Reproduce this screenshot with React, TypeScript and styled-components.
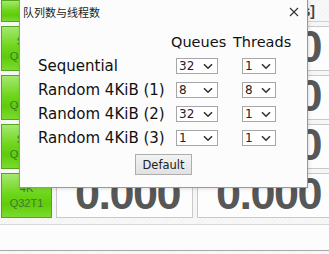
import { Fragment } from 'react';
import styled, { createGlobalStyle } from 'styled-components';

const GlobalStyle = createGlobalStyle`
  html, body {
    margin: 0;
    padding: 0;
    background: #f7f7f7;
    overflow: hidden;
  }
  body {
    font-family: "DejaVu Sans", Verdana, sans-serif;
  }
`;

const Page = styled.div`
  position: relative;
  width: 329px;
  height: 254px;
  overflow: hidden;
  background: repeating-linear-gradient(135deg, #f8f8f8 0 2px, #f3f3f3 2px 3px);
`;

const Board = styled.div`
  display: grid;
  grid-template-columns: 51px 137px 137px;
  grid-template-rows: 22px repeat(4, 45px);
  column-gap: 4px;
  row-gap: 4px;
  padding-left: 1px;
`;

const GreenButton = styled.div`
  box-sizing: border-box;
  display: flex;
  flex-direction: column;
  align-items: center;
  justify-content: center;
  border: 1px solid #56a51a;
  background: linear-gradient(#a5e872 0%, #6fd61c 45%, #5fcc08 70%, #7bdb30 100%);
  color: #3f7a30;
  font-family: "Liberation Sans", Arial, sans-serif;
  font-size: 11px;
  line-height: 15px;
`;

const HeaderCell = styled.div`
  display: flex;
  align-items: center;
  justify-content: flex-end;
  padding-right: 19px;
  border-bottom: 1px solid #d0d0d0;
  font-family: "Liberation Sans", Arial, sans-serif;
  font-weight: bold;
  font-size: 14px;
  color: #444;
`;

const ValueBox = styled.div`
  box-sizing: border-box;
  display: flex;
  align-items: center;
  justify-content: flex-end;
  padding: 0 12px 3px 0;
  border: 1px solid #c9c9c9;
  background: #fdfdfd;
  font-family: "Liberation Sans", Arial, sans-serif;
  font-weight: bold;
  font-size: 45px;
  color: #575757;
  letter-spacing: -1.5px;
`;

const Footer = styled.div`
  margin-top: 6px;
  height: 25px;
  border-top: 1px solid #d8d8d8;
  border-bottom: 1px solid #a8a8a8;
  background: #fcfcfc;
`;

const Dialog = styled.div`
  position: absolute;
  left: 19px;
  top: -1px;
  width: 289px;
  height: 189px;
  box-sizing: border-box;
  border: 1px solid #6aa3d8;
  background: #fcfcfc;
  box-shadow: 1px 1px 4px rgba(0, 0, 0, 0.12);
  display: flex;
  flex-direction: column;
`;

const TitleBar = styled.div`
  height: 24px;
  display: flex;
  align-items: center;
  justify-content: space-between;
  padding: 0 8px 0 3px;
  font-family: "Noto Sans CJK SC", sans-serif;
  font-size: 11px;
  color: #222;
`;

const CloseIcon = styled.svg`
  width: 10px;
  height: 10px;
`;

const Settings = styled.div`
  display: grid;
  grid-template-columns: 133px 62px 58px;
  grid-template-rows: 21px repeat(4, 24px);
  margin-top: 9px;
  padding-left: 18px;
  font-size: 15px;
  color: #111;
`;

const ColHead = styled.div`
  line-height: 18px;
  font-size: 14.5px;
`;

const Label = styled.div`
  display: flex;
  align-items: center;
`;

const Cell = styled.div<{ $offset: number }>`
  display: flex;
  align-items: center;
  padding-left: ${p => p.$offset}px;
`;

const SelectBox = styled.div<{ $w: number }>`
  box-sizing: border-box;
  width: ${p => p.$w}px;
  height: 16px;
  border: 1px solid #a6a6a6;
  background: #fff;
  display: flex;
  align-items: center;
  justify-content: space-between;
  padding: 0 4px 0 2px;
  font-size: 12px;
  color: #222;
`;

const Chevron = styled.svg`
  width: 10px;
  height: 7px;
`;

const Actions = styled.div`
  display: flex;
  justify-content: center;
  margin-top: 4px;
`;

const DefaultButton = styled.button`
  width: 57px;
  height: 21px;
  padding: 0;
  border: 1px solid #adadad;
  background: linear-gradient(#f3f3f3, #e1e1e1);
  font-family: "DejaVu Sans", Verdana, sans-serif;
  font-size: 11.5px;
  color: #222;
`;

function Select({ value, width }: { value: string, width: number }) {
  return (
    <SelectBox $w={width}>
      <span>{value}</span>
      <Chevron viewBox="0 0 10 7">
        <path d="M1 1.2 L5 5.2 L9 1.2" fill="none" stroke="#333" strokeWidth="1.6" />
      </Chevron>
    </SelectBox>
  );
}

const rows = [
  { label: 'Sequential', q: '32', t: '1' },
  { label: 'Random 4KiB (1)', q: '8', t: '8' },
  { label: 'Random 4KiB (2)', q: '32', t: '1' },
  { label: 'Random 4KiB (3)', q: '1', t: '1' },
];

const tests = [
  ['Seq', 'Q32T1'],
  ['4K', 'Q32T1'],
  ['Seq', 'Q32T1'],
  ['4K', 'Q32T1'],
];

export default function App() {
  return (
    <>
      <GlobalStyle />
      <Page>
        <Board>
          <GreenButton>All</GreenButton>
          <HeaderCell>Read [MB/s]</HeaderCell>
          <HeaderCell>Write [MB/s]</HeaderCell>
          {tests.map(([a, b], i) => (
            <Fragment key={i}>
              <GreenButton>
                <span>{a}</span>
                <span>{b}</span>
              </GreenButton>
              <ValueBox>0.000</ValueBox>
              <ValueBox>0.000</ValueBox>
            </Fragment>
          ))}
        </Board>
        <Footer />

        <Dialog>
          <TitleBar>
            <span>队列数与线程数</span>
            <CloseIcon viewBox="0 0 10 10">
              <path d="M1 1 L9 9 M9 1 L1 9" stroke="#333" strokeWidth="1.1" />
            </CloseIcon>
          </TitleBar>
          <Settings>
            <div />
            <ColHead>Queues</ColHead>
            <ColHead>Threads</ColHead>
            {rows.map(r => (
              <Fragment key={r.label}>
                <Label>{r.label}</Label>
                <Cell $offset={5}><Select value={r.q} width={42} /></Cell>
                <Cell $offset={9}><Select value={r.t} width={34} /></Cell>
              </Fragment>
            ))}
          </Settings>
          <Actions>
            <DefaultButton>Default</DefaultButton>
          </Actions>
        </Dialog>
      </Page>
    </>
  );
}
